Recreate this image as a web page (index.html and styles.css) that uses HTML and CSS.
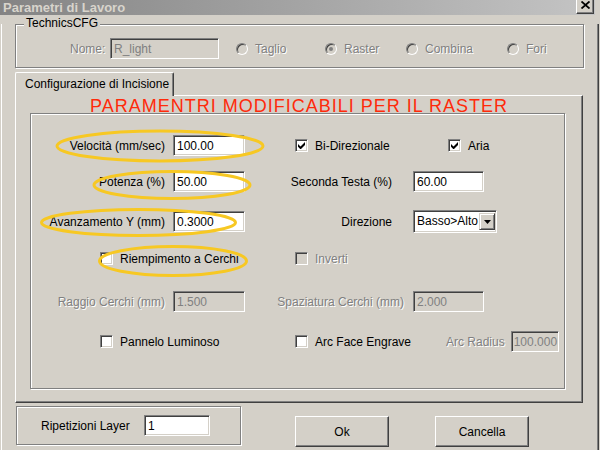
FILE: index.html
```html
<!DOCTYPE html>
<html>
<head>
<meta charset="utf-8">
<title>Parametri di Lavoro</title>
<link rel="stylesheet" href="styles.css">
</head>
<body>
<div class="window">
  <div class="titlebar">
    <span class="title">Parametri di Lavoro</span>
    <span class="close"><svg width="9" height="8" viewBox="0 0 9 8"><path d="M0.5 0.5 L8.5 7.5 M8.5 0.5 L0.5 7.5" stroke="#000" stroke-width="1.8" fill="none"/></svg></span>
  </div>
  <div class="content">
    <div class="group cfg">
      <span class="legend">TechnicsCFG</span>
      <div class="cfg-row">
        <span class="dis nome">Nome:</span>
        <span class="edit dis w-nome">R_light</span>
        <span class="radio-item w-taglio"><span class="radio"></span><span class="dis">Taglio</span></span>
        <span class="radio-item w-raster"><span class="radio on"></span><span class="dis">Raster</span></span>
        <span class="radio-item w-combina"><span class="radio"></span><span class="dis">Combina</span></span>
        <span class="radio-item"><span class="radio"></span><span class="dis">Fori</span></span>
      </div>
    </div>

    <div class="tabs"><div class="tab">Configurazione di Incisione</div></div>

    <div class="panel">
      <div class="heading">PARAMENTRI MODIFICABILI PER IL RASTER</div>
      <div class="group inner">
        <div class="row r1">
          <span class="lab">Velocità (mm/sec)</span>
          <span class="edit">100.00</span>
          <div class="right">
            <span class="check-item w-bidir"><span class="check"><svg width="7" height="7" viewBox="0 0 7 7"><polygon points="0,2 2.5,4.5 7,0 7,3 3,7 2.2,7 0,4.8" fill="#000"/></svg></span>Bi-Direzionale</span>
            <span class="check-item"><span class="check"><svg width="7" height="7" viewBox="0 0 7 7"><polygon points="0,2 2.5,4.5 7,0 7,3 3,7 2.2,7 0,4.8" fill="#000"/></svg></span>Aria</span>
          </div>
        </div>
        <div class="row r2">
          <span class="lab">Potenza (%)</span>
          <span class="edit">50.00</span>
          <span class="rlab">Seconda Testa (%)</span>
          <span class="edit w-right">60.00</span>
        </div>
        <div class="row r3">
          <span class="lab">Avanzamento Y (mm)</span>
          <span class="edit">0.3000</span>
          <span class="rlab">Direzione</span>
          <span class="select"><span class="val">Basso&gt;Alto</span><span class="drop"><svg width="7" height="4" viewBox="0 0 7 4"><polygon points="0,0 7,0 3.5,4" fill="#000"/></svg></span></span>
        </div>
        <div class="row r4">
          <div class="left">
            <span class="check-item"><span class="check"></span>Riempimento a Cerchi</span>
          </div>
          <div class="right">
            <span class="check-item"><span class="check dis-box"></span><span class="dis">Inverti</span></span>
          </div>
        </div>
        <div class="row r5">
          <span class="lab dis">Raggio Cerchi (mm)</span>
          <span class="edit dis">1.500</span>
          <span class="rlab near dis">Spaziatura Cerchi (mm)</span>
          <span class="edit dis w-right">2.000</span>
        </div>
        <div class="row r6">
          <div class="left">
            <span class="check-item"><span class="check"></span>Pannelo Luminoso</span>
          </div>
          <div class="right">
            <span class="check-item w-arc"><span class="check"></span>Arc Face Engrave</span>
            <span class="dis arc-lab">Arc Radius</span>
            <span class="edit dis w-arc-edit">100.000</span>
          </div>
        </div>
      </div>
    </div>

    <div class="bottom">
      <div class="group rep">
        <span class="rep-lab">Ripetizioni Layer</span>
        <span class="edit w-rep">1</span>
      </div>
      <div class="btn ok">Ok</div>
      <div class="btn cancel">Cancella</div>
    </div>
  </div>

  <svg class="marks" width="600" height="450" viewBox="0 0 600 450">
    <g fill="none" stroke="#f7c823" stroke-width="3">
      <ellipse cx="160" cy="146" rx="103" ry="15"/>
      <ellipse cx="172" cy="185" rx="78" ry="13.5"/>
      <ellipse cx="138.5" cy="222.5" rx="97" ry="13"/>
      <ellipse cx="173" cy="261" rx="73.5" ry="14.5"/>
    </g>
  </svg>
</div>
</body>
</html>
```
FILE: styles.css
```css
* { box-sizing: border-box; }
html, body { margin: 0; padding: 0; }
body {
  width: 600px;
  height: 450px;
  overflow: hidden;
  background: #d4d0c8;
  font-family: "Liberation Sans", Arial, sans-serif;
  font-size: 12px;
  color: #000;
}
.window {
  position: relative;
  width: 600px;
  height: 450px;
}

/* title bar */
.titlebar {
  display: flex;
  align-items: flex-start;
  width: 595px;
  height: 15px;
  background: linear-gradient(to right, #848484, #c4c4c4);
}
.title {
  padding-left: 3px;
  padding-top: 1px;
  font-weight: bold;
  font-size: 13px;
  line-height: 13px;
  color: #d8d4cc;
}
.close {
  margin-left: auto;
  margin-right: 1px;
  width: 18px;
  height: 14px;
  padding-top: 1px;
  display: flex;
  justify-content: center;
  align-items: flex-start;
  background: #d4d0c8;
  border-left: 1px solid #fff;
  border-right: 1px solid #404040;
  border-bottom: 1px solid #404040;
  box-shadow: inset -1px -1px #808080;
}

.content {
  width: 598px;
  height: 435px;
  margin-left: 1px;
  padding-left: 14px;
  border-right: 1px solid #404040;
  box-shadow: inset 1px 0 #fff, inset -1px 0 #808080;
}

/* etched group box */
.group {
  position: relative;
  border: 1px solid #808080;
  box-shadow: inset 1px 1px #fff, 1px 1px #fff;
}
.legend {
  position: absolute;
  left: 8px;
  top: -9px;
  padding: 0 2px;
  line-height: 14px;
  background: #d4d0c8;
}
.cfg {
  width: 569px;
  height: 44px;
  margin-top: 9px;
}
.cfg-row {
  display: flex;
  align-items: center;
  height: 23px;
  margin-top: 12px;
  padding-left: 54px;
}
.nome { width: 40px; }
.w-nome { width: 109px; height: 23px; }
.radio-item { display: flex; align-items: center; }
.w-taglio { margin-left: 17px; width: 89px; }
.w-raster { width: 81px; }
.w-combina { width: 101px; }

.radio {
  flex: none;
  width: 12px;
  height: 12px;
  margin-right: 7px;
  border-radius: 50%;
  border: 1px solid;
  border-color: #808080 #fff #fff #808080;
  box-shadow: inset 1px 1px #404040;
  background: #d4d0c8;
  display: flex;
  align-items: center;
  justify-content: center;
}
.radio.on::after {
  content: "";
  width: 4px;
  height: 4px;
  border-radius: 50%;
  background: #808080;
}

.dis {
  color: #808080;
  text-shadow: 1px 1px 0 #fff;
}

/* edit boxes */
.edit {
  display: flex;
  align-items: center;
  height: 21px;
  padding-left: 3px;
  background: #fff;
  border: 1px solid;
  border-color: #808080 #fff #fff #808080;
  box-shadow: inset 1px 1px #404040, inset -1px -1px #d4d0c8;
  white-space: nowrap;
  overflow: hidden;
}
.edit.dis {
  background: #d4d0c8;
  color: #808080;
  text-shadow: none;
}

/* tabs */
.tabs {
  position: relative;
  display: flex;
  margin-top: 4px;
}
.tab {
  width: 159px;
  height: 24px;
  margin-bottom: -1px;
  padding-left: 9px;
  padding-top: 4px;
  line-height: 14px;
  background: #d4d0c8;
  border-top: 1px solid #fff;
  border-left: 1px solid #fff;
  border-right: 1px solid #404040;
  border-top-left-radius: 2px;
  border-top-right-radius: 2px;
  box-shadow: inset -1px 0 #808080;
}
.panel {
  width: 568px;
  height: 308px;
  border-top: 1px solid #fff;
  border-left: 1px solid #fff;
  border-right: 1px solid #404040;
  border-bottom: 1px solid #404040;
  box-shadow: inset -1px -1px #808080;
}
.heading {
  height: 19px;
  padding-top: 2px;
  line-height: 17px;
  text-align: center;
  font-size: 18px;
  letter-spacing: 1px;
  color: #ff2a0a;
}
.inner {
  width: 535px;
  height: 276px;
  margin-left: 14px;
  margin-top: -2px;
}

/* form rows */
.row {
  display: grid;
  grid-template-columns: 142px 72px 168px 1fr;
  align-items: center;
  height: 21px;
}
.r1 { margin-top: 21px; }
.r2 { margin-top: 15px; }
.r3 { margin-top: 18px; }
.r4 { margin-top: 17px; }
.r5 { margin-top: 22px; }
.r6 { margin-top: 19px; }

.lab {
  text-align: right;
  padding-right: 8px;
  white-space: nowrap;
}
.rlab {
  text-align: right;
  padding-right: 21px;
  white-space: nowrap;
}
.rlab.near { padding-right: 9px; }
.w-right { width: 71px; }
.left {
  grid-column: 1 / 3;
  display: flex;
  align-items: center;
  padding-left: 69px;
}
.right {
  grid-column: 3 / 5;
  display: flex;
  align-items: center;
  padding-left: 50px;
}

.check-item {
  display: flex;
  align-items: center;
  white-space: nowrap;
}
.w-bidir { width: 153px; }
.w-arc { width: 151px; }
.arc-lab { margin-right: 6px; white-space: nowrap; }
.w-arc-edit { width: 48px; padding-left: 2px; }

.check {
  flex: none;
  width: 13px;
  height: 13px;
  margin-right: 7px;
  padding: 2px 0 0 2px;
  background: #fff;
  border: 1px solid;
  border-color: #808080 #fff #fff #808080;
  box-shadow: inset 1px 1px #404040, inset -1px -1px #d4d0c8;
}
.check svg { display: block; }
.check.dis-box { background: #d4d0c8; }

.select {
  display: flex;
  width: 84px;
  height: 23px;
  background: #fff;
  border: 1px solid;
  border-color: #808080 #fff #fff #808080;
  box-shadow: inset 1px 1px #404040, inset -1px -1px #d4d0c8;
  padding: 2px 1px 2px 2px;
}
.select .val {
  flex: 1;
  padding-left: 1px;
  line-height: 17px;
  white-space: nowrap;
}
.select .drop {
  flex: none;
  width: 16px;
  display: flex;
  align-items: center;
  justify-content: center;
  background: #d4d0c8;
  border-top: 1px solid #d4d0c8;
  border-left: 1px solid #d4d0c8;
  border-right: 1px solid #404040;
  border-bottom: 1px solid #404040;
  box-shadow: inset 1px 1px #fff, inset -1px -1px #808080;
}

/* bottom row */
.bottom {
  display: flex;
  align-items: flex-start;
  margin-top: 3px;
  padding-left: 1px;
}
.rep {
  width: 225px;
  height: 39px;
  display: flex;
  align-items: center;
  padding-left: 24px;
}
.rep-lab { width: 103px; white-space: nowrap; }
.w-rep { width: 66px; }
.btn {
  width: 94px;
  height: 31px;
  margin-top: 10px;
  display: flex;
  align-items: center;
  justify-content: center;
  background: #d4d0c8;
  border: 1px solid;
  border-color: #fff #404040 #404040 #fff;
  box-shadow: inset -1px -1px #808080;
}
.ok { margin-left: 54px; }
.cancel { margin-left: 46px; }

/* annotation ellipses drawn over the dialog */
.marks {
  position: absolute;
  left: 0;
  top: 0;
  pointer-events: none;
}
```
